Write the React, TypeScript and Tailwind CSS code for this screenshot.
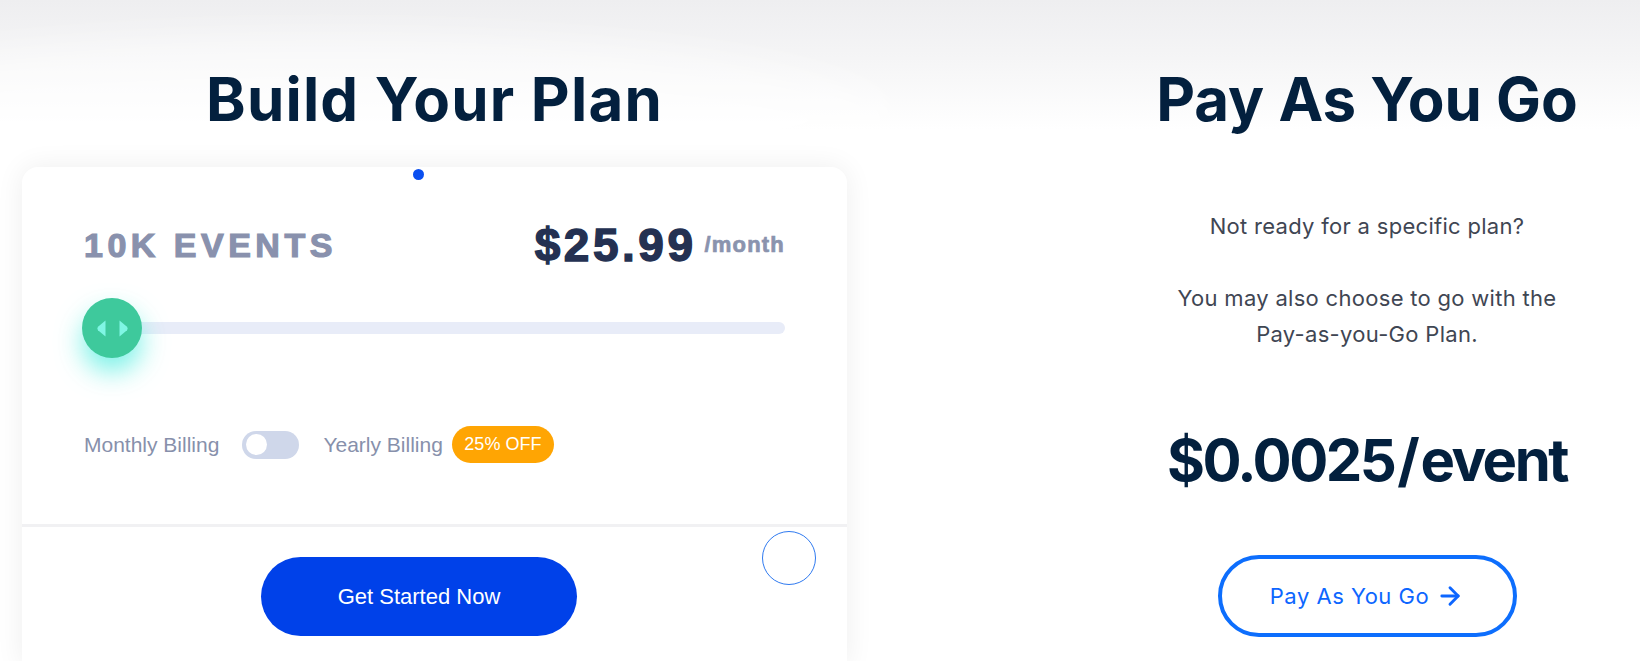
import { ArrowRight } from "lucide-react";

function ThumbArrows() {
    return (
        <svg width="33" height="17" viewBox="0 0 33 17" fill="#80f6e4">
            <path d="M9.5 0.5 L9.5 16.5 L2 10.2 Q0.6 8.5 2 6.8 Z" />
            <path d="M23.5 0.5 L23.5 16.5 L31 10.2 Q32.4 8.5 31 6.8 Z" />
        </svg>
    );
}

function PlanCard() {
    return (
        <div className="relative mt-[38px] rounded-t-[16px] bg-white shadow-[0_0_28px_rgba(0,0,0,0.07)] font-['Liberation_Sans',Arial,sans-serif]">
            <div className="absolute left-[391px] top-[2px] h-[11px] w-[11px] rounded-full bg-[#0a4ff0]" />

            <div className="px-[62px] pt-[55px] pb-[61px]">
                <div className="flex h-[46px] items-center justify-between">
                    <span className="text-[34px] font-bold leading-none tracking-[4.5px] text-[#8991ad] [-webkit-text-stroke:1.2px_#8991ad]">
                        10K EVENTS
                    </span>
                    <div className="flex items-center gap-[8px]">
                        <span className="text-[46px] font-bold leading-none tracking-[3.5px] text-[#243152] [-webkit-text-stroke:1.4px_#243152]">
                            $25.99
                        </span>
                        <span className="text-[22px] font-bold leading-none tracking-[1.2px] text-[#8a93ae] [-webkit-text-stroke:0.7px_#8a93ae]">
                            /month
                        </span>
                    </div>
                </div>

                <div className="relative mt-[30px] flex h-[60px] items-center">
                    <div className="h-[12px] w-full rounded-full bg-[#e8ecf8]" />
                    <div className="absolute left-[-2px] top-0 flex h-[60px] w-[60px] items-center justify-center rounded-full bg-[#3ec99c] shadow-[0_14px_26px_rgba(105,240,228,0.85)]">
                        <ThumbArrows />
                    </div>
                </div>

                <div className="mt-[68px] flex h-[37px] items-center">
                    <span className="text-[21px] text-[#8790ab]">Monthly Billing</span>
                    <div className="ml-[23px] flex h-[28px] w-[57px] items-center rounded-full bg-[#cfd7ea] px-[4px]">
                        <div className="h-[21px] w-[21px] rounded-full bg-white" />
                    </div>
                    <span className="ml-[24px] text-[21px] text-[#8790ab]">Yearly Billing</span>
                    <span className="ml-[9px] flex h-[37px] w-[102px] items-center justify-center rounded-full bg-[#ffa503] text-[18px] text-white">
                        25% OFF
                    </span>
                </div>
            </div>

            <div className="h-[3px] bg-[#f1f1f3]" />

            <div className="relative flex justify-center pt-[30px] pr-[31px] pb-[30px]">
                <button className="h-[79px] w-[316px] rounded-full bg-[#0041e9] text-[22px] text-white">
                    Get Started Now
                </button>
                <div className="absolute left-[740px] top-[4px] h-[54px] w-[54px] rounded-full border-[1.5px] border-[#2f7af0]" />
            </div>
        </div>
    );
}

export default function App() {
    return (
        <div className="relative h-[661px] w-full overflow-hidden bg-white font-['Inter',sans-serif]">
            <div className="pointer-events-none absolute inset-x-0 top-0 h-[130px] bg-[linear-gradient(180deg,#eeeef0_0%,#f5f5f6_45%,#ffffff_100%)]" />
            <div className="pointer-events-none absolute left-[-250px] top-[35px] h-[170px] w-[1150px] rounded-[50%] bg-white/50 blur-[18px]" />

            <div className="relative flex">
                <div className="ml-[22px] w-[825px]">
                    <h2 className="mt-[69px] text-center text-[60px] font-bold leading-[60px] tracking-[1.2px] text-[#03203e]">
                        Build Your Plan
                    </h2>
                    <PlanCard />
                </div>

                <div className="ml-auto flex w-[546px] flex-col items-center text-center">
                    <h2 className="mt-[69px] text-[60px] font-bold leading-[60px] text-[#03203e]">
                        Pay As You Go
                    </h2>
                    <p className="mt-[79px] text-[22px] leading-[36px] tracking-[0.3px] text-[#3f4653]">
                        Not ready for a specific plan?
                    </p>
                    <p className="mt-[36px] text-[22px] leading-[36px] tracking-[0.3px] text-[#3f4653]">
                        You may also choose to go with the
                        <br />
                        Pay-as-you-Go Plan.
                    </p>
                    <div className="mt-[79px] flex items-center text-[58px] font-bold leading-none tracking-[-2.5px] text-[#03203e]">
                        $0.0025<span className="px-[3px]">/</span>event
                    </div>
                    <button className="mt-[66px] flex h-[82px] w-[299px] items-center justify-center gap-[7px] rounded-full border-[4px] border-[#0d6efd] text-[22px] tracking-[0.5px] text-[#0d66ff]">
                        Pay As You Go
                        <ArrowRight size={28} strokeWidth={2.5} />
                    </button>
                </div>
            </div>
        </div>
    );
}
